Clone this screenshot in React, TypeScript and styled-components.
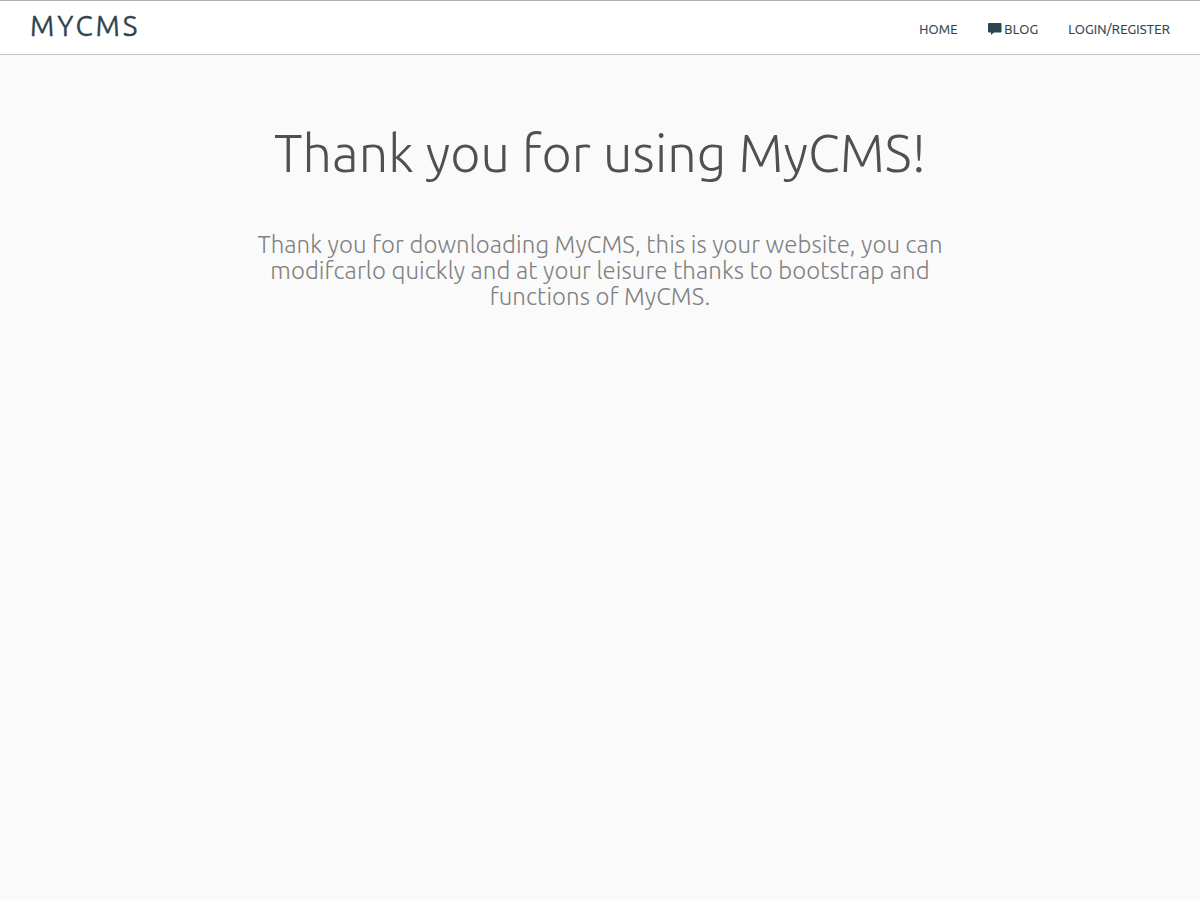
import React from "react";
import styled, { createGlobalStyle } from "styled-components";

const GlobalStyle = createGlobalStyle`
  * { box-sizing: border-box; }
  body {
    margin: 0;
    background: #fafafa;
    font-family: Ubuntu, "Open Sans", "Noto Sans", sans-serif;
  }
`;

const Navbar = styled.nav`
  display: flex;
  justify-content: space-between;
  height: 55px;
  padding: 0 30px;
  background: #fff;
  border-top: 1px solid #b3b3b3;
  border-bottom: 1px solid #c6c6c6;
`;

const Brand = styled.a`
  font-size: 28px;
  line-height: 38px;
  padding-top: 6px;
  letter-spacing: 2.9px;
  -webkit-text-stroke: 0.3px #2f4451;
  color: #2f4451;
`;

const Menu = styled.ul`
  display: flex;
  gap: 30px;
  margin: 0;
  padding: 18px 0 0;
  list-style: none;
`;

const MenuLink = styled.a`
  display: flex;
  align-items: center;
  font-size: 13px;
  line-height: 20px;
  letter-spacing: 0.2px;
  -webkit-text-stroke: 0.2px #2f4451;
  color: #2f4451;
`;

const CommentIcon = styled.svg`
  width: 14px;
  height: 12px;
  margin-right: 2.5px;
`;

const Intro = styled.main`
  display: flex;
  flex-direction: column;
  align-items: center;
  padding-top: 62px;
`;

const Title = styled.h1`
  margin: 0;
  font-size: 52px;
  font-weight: 300;
  line-height: 72px;
  letter-spacing: 0.12px;
  white-space: nowrap;
  color: #505050;
`;

const Lead = styled.p`
  width: 720px;
  margin: 43px 0 0;
  font-size: 24px;
  font-weight: 300;
  line-height: 26px;
  letter-spacing: 0.06px;
  text-align: center;
  color: #808080;
`;

export default function App() {
  return (
    <>
      <GlobalStyle />
      <Navbar>
        <Brand>MYCMS</Brand>
        <Menu>
          <li><MenuLink>HOME</MenuLink></li>
          <li>
            <MenuLink>
              <CommentIcon viewBox="0 0 14 12">
                <path d="M1 0h11.5q1 0 1 1v7.5q0 1-1 1H6L3 12V9.5H1q-1 0-1-1V1Q0 0 1 0z" fill="#2f4451" />
              </CommentIcon>
              BLOG
            </MenuLink>
          </li>
          <li><MenuLink>LOGIN/REGISTER</MenuLink></li>
        </Menu>
      </Navbar>
      <Intro>
        <Title>Thank you for using MyCMS!</Title>
        <Lead>
          Thank you for downloading MyCMS, this is your website, you can
          modifcarlo quickly and at your leisure thanks to bootstrap and
          functions of MyCMS.
        </Lead>
      </Intro>
    </>
  );
}
